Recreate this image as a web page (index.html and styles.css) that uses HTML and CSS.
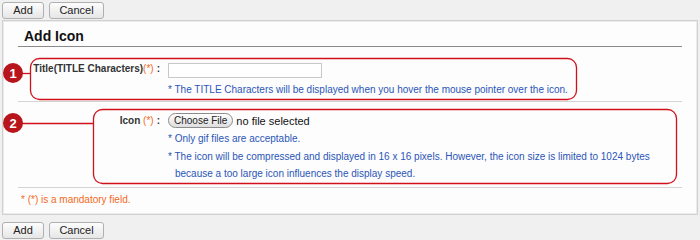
FILE: index.html
```html
<!DOCTYPE html>
<html>
<head>
<meta charset="utf-8">
<link rel="stylesheet" href="styles.css">
</head>
<body>
<div class="page">
  <div class="toolbar">
    <button class="btn btn-add">Add</button>
    <button class="btn btn-cancel">Cancel</button>
  </div>
  <div class="panel">
    <h2 class="panel-title">Add Icon</h2>
    <div class="form-row row-title">
      <div class="label">Title(TITLE Characters)<span class="req">(*)</span>:</div>
      <div class="field">
        <input class="text-input" type="text">
        <div class="note">* The TITLE Characters will be displayed when you hover the mouse pointer over the icon.</div>
      </div>
    </div>
    <div class="form-row row-icon">
      <div class="label">Icon<span class="req"> (*)</span>:</div>
      <div class="field">
        <div class="file-line"><span class="file-btn">Choose File</span><span class="file-text">no file selected</span></div>
        <div class="note">* Only gif files are acceptable.</div>
        <div class="note note-long">* The icon will be compressed and displayed in 16 x 16 pixels. However, the icon size is limited to 1024 bytes<br><span class="indent">because a too large icon influences the display speed.</span></div>
      </div>
    </div>
    <div class="mandatory">* (*) is a mandatory field.</div>
  </div>
  <div class="toolbar toolbar-bottom">
    <button class="btn btn-add">Add</button>
    <button class="btn btn-cancel">Cancel</button>
  </div>
  <svg class="annot" width="700" height="240" viewBox="0 0 700 240">
    <g fill="none" stroke="#d0101a" stroke-width="1.3">
      <rect x="30.5" y="58.5" width="546" height="41" rx="9"/>
      <line x1="20" y1="73.5" x2="31" y2="73.5"/>
      <rect x="93.5" y="109.5" width="583" height="74" rx="9"/>
      <line x1="20" y1="123.5" x2="94" y2="123.5"/>
    </g>
    <circle cx="13" cy="73" r="10" fill="#b8141c"/>
    <circle cx="13" cy="123" r="10" fill="#b8141c"/>
    <text x="13" y="77.5" class="num">1</text>
    <text x="13" y="127.5" class="num">2</text>
  </svg>
</div>
</body>
</html>
```
FILE: styles.css
```css
html, body {
  margin: 0;
  padding: 0;
}
body {
  background: #f0f0f0;
  font-family: "Liberation Sans", Arial, sans-serif;
  font-size: 10px;
  color: #222;
}
.page {
  position: relative;
  width: 700px;
  height: 240px;
  overflow: hidden;
}
.toolbar {
  display: flex;
  gap: 5px;
  padding: 2px 2px 0 2px;
  height: 19px;
  box-sizing: border-box;
}
.toolbar-bottom {
  padding-top: 7px;
  height: 25px;
}
.btn {
  height: 17px;
  border: 1px solid #b0b0b0;
  border-radius: 3px;
  background: linear-gradient(#fdfdfd, #e6e6e6);
  font-family: "Liberation Sans", Arial, sans-serif;
  font-size: 11px;
  color: #222;
  padding: 0;
  line-height: 15px;
}
.btn-add { width: 42px; }
.btn-cancel { width: 55px; }
.panel {
  margin: 1px 2px 0 2px;
  background: #fdfdfd;
  border: 1px solid #d0d0d0;
  box-shadow: inset 0 0 0 1px #ebebeb;
  height: 195px;
  box-sizing: border-box;
  padding: 0 15px 0 15px;
}
.panel-title {
  margin: 0;
  font-size: 14px;
  font-weight: bold;
  color: #111;
  padding: 7px 0 0 6px;
  height: 26px;
  box-sizing: border-box;
  line-height: 16px;
  border-bottom: 1px solid #8a8a8a;
}
.form-row {
  display: grid;
  grid-template-columns: 142px 1fr;
  column-gap: 8px;
  border-bottom: 1px solid #d4d4d4;
}
.row-title {
  padding-top: 16px;
  height: 55px;
  box-sizing: border-box;
}
.row-icon {
  padding-top: 9px;
  height: 86px;
  box-sizing: border-box;
}
.label {
  text-align: right;
  font-weight: bold;
  color: #333;
  line-height: 15px;
  white-space: nowrap;
}
.row-title .label { margin-top: -2px; }
.row-icon .label { padding-top: 2px; }
.req {
  color: #f26a22;
  font-weight: normal;
  margin-right: 3px;
}
.field {
  display: flex;
  flex-direction: column;
  align-items: flex-start;
}
.text-input {
  width: 154px;
  height: 15px;
  box-sizing: border-box;
  border: 1px solid #c8c8c8;
  background: #fff;
  margin: 0;
  padding: 0;
}
.row-title .note { margin-top: 3px; }
.note {
  color: #2a55b8;
  line-height: 17px;
  white-space: nowrap;
}
.note-long {
  margin-top: 1px;
}
.file-line {
  display: flex;
  align-items: center;
  height: 19px;
}
.file-btn {
  display: inline-block;
  border: 1px solid #8c8c8c;
  border-radius: 8px;
  background: linear-gradient(#ffffff, #dedede);
  padding: 0 5px;
  height: 13px;
  line-height: 13px;
  font-size: 10px;
  color: #222;
  margin-right: 3px;
}
.file-text {
  color: #111;
  font-size: 11px;
}
.indent {
  padding-left: 7px;
}
.mandatory {
  color: #f26a22;
  padding: 5px 0 0 3px;
  line-height: 14px;
}
.annot {
  position: absolute;
  left: 0;
  top: 0;
  pointer-events: none;
}
.num {
  fill: #fff;
  font-family: "Liberation Sans", Arial, sans-serif;
  font-size: 13px;
  font-weight: bold;
  text-anchor: middle;
}
```
